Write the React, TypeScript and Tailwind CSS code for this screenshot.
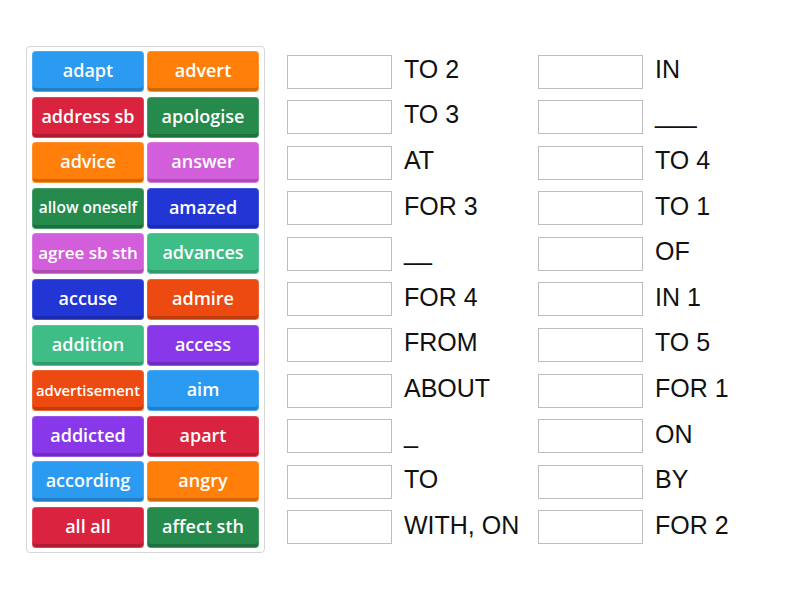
const tiles: { left: [string, string, string?]; right: [string, string, string?] }[] = [
  { left: ["adapt", "bg-[#2a9bf0]"], right: ["advert", "bg-[#ff7f0a]"] },
  { left: ["address sb", "bg-[#d9233f]"], right: ["apologise", "bg-[#258a4b]"] },
  { left: ["advice", "bg-[#ff7f0a]"], right: ["answer", "bg-[#d35edb]"] },
  { left: ["allow oneself", "bg-[#258a4b]", "text-[15.5px]"], right: ["amazed", "bg-[#2235d5]"] },
  { left: ["agree sb sth", "bg-[#d35edb]", "text-[17px]"], right: ["advances", "bg-[#3ebd87]"] },
  { left: ["accuse", "bg-[#2235d5]"], right: ["admire", "bg-[#ec4a10]"] },
  { left: ["addition", "bg-[#3ebd87]"], right: ["access", "bg-[#8838e8]"] },
  { left: ["advertisement", "bg-[#ec4a10]", "text-[14.8px]"], right: ["aim", "bg-[#2a9bf0]"] },
  { left: ["addicted", "bg-[#8838e8]"], right: ["apart", "bg-[#d9233f]"] },
  { left: ["according", "bg-[#2a9bf0]"], right: ["angry", "bg-[#ff7f0a]"] },
  { left: ["all all", "bg-[#d9233f]"], right: ["affect sth", "bg-[#258a4b]"] },
];

const col1 = ["TO 2", "TO 3", "AT", "FOR 3", "__", "FOR 4", "FROM", "ABOUT", "_", "TO", "WITH, ON"];
const col2 = ["IN", "___", "TO 4", "TO 1", "OF", "IN 1", "TO 5", "FOR 1", "ON", "BY", "FOR 2"];

function Tile({ item }: { item: [string, string, string?] }) {
  const [label, bg, size] = item;
  return (
    <div
      className={`${bg} h-[41px] rounded-[4px] flex items-center justify-center text-white font-semibold whitespace-nowrap overflow-hidden border border-white/15 shadow-[inset_0_-3px_0_rgba(0,0,0,0.18)] ${size ?? "text-[18px]"}`}
    >
      <span className="-mt-[2px]">{label}</span>
    </div>
  );
}

function AnswerColumn({ items }: { items: string[] }) {
  return (
    <div className="flex flex-col gap-y-[4.6px] w-[251px]">
      {items.map((t, i) => (
        <div key={i} className="h-[41px] flex items-center">
          <div className="w-[105px] h-[34px] border border-[#bdbdbd] bg-white shrink-0" />
          <div className="ml-[12px] text-[25px] text-[#111] pb-[4px] whitespace-nowrap">{t}</div>
        </div>
      ))}
    </div>
  );
}

export default function App() {
  return (
    <div className="w-[800px] h-[600px] bg-white flex items-start pt-[46px] pl-[26px] font-['Liberation_Sans',sans-serif]">
      <div className="w-[239px] border border-[#d6d6d6] rounded-[4px] p-[4px] px-[5px] grid grid-cols-2 gap-x-[3px] gap-y-[4.6px] font-['Open_Sans',sans-serif]">
        {tiles.flatMap((r, i) => [
          <Tile key={`l${i}`} item={r.left} />,
          <Tile key={`r${i}`} item={r.right} />,
        ])}
      </div>
      <div className="flex ml-[22px] pt-[5px]">
        <AnswerColumn items={col1} />
        <AnswerColumn items={col2} />
      </div>
    </div>
  );
}
